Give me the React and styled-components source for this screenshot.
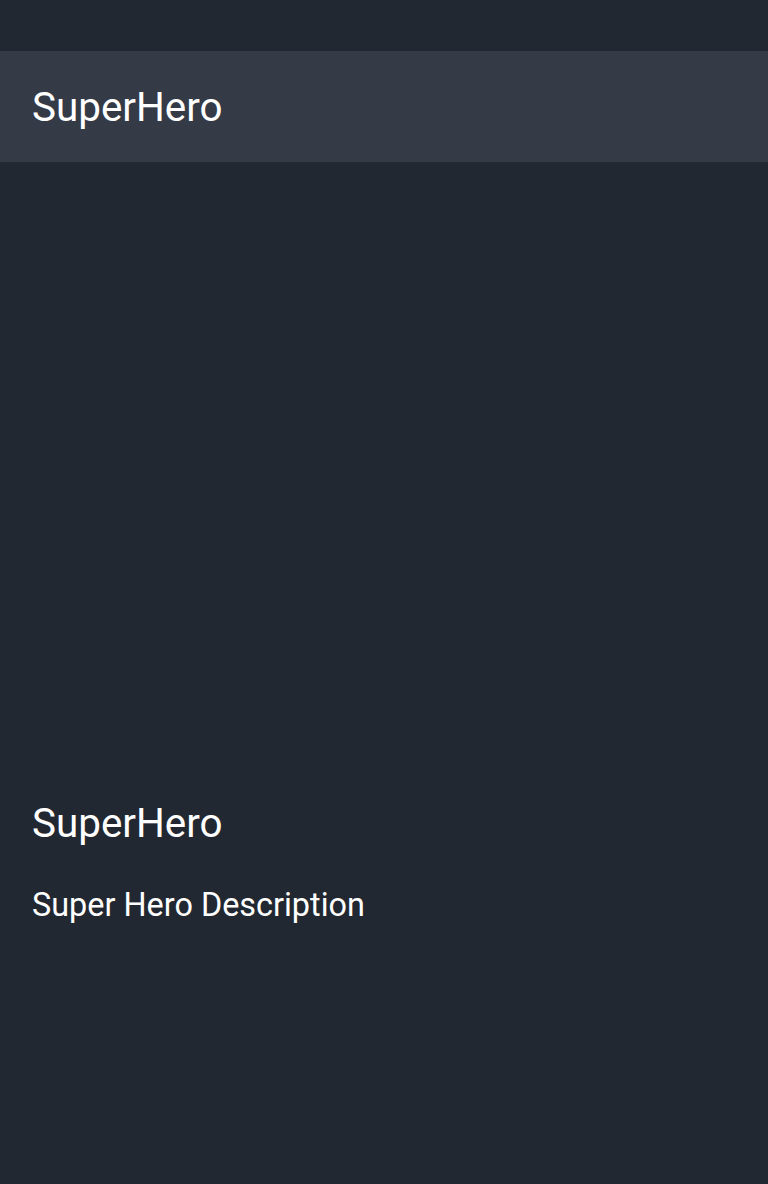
import React from "react";
import styled, { createGlobalStyle } from "styled-components";

const Global = createGlobalStyle`
  html, body {
    margin: 0;
    padding: 0;
    background: #222831;
  }
  * { box-sizing: border-box; }
`;

const Screen = styled.div`
  display: flex;
  flex-direction: column;
  min-height: 1184px;
  background: #222831;
  font-family: Roboto, "Noto Sans", sans-serif;
  color: #ffffff;
`;

const StatusBar = styled.div`
  height: 51px;
  background: #222831;
`;

const Toolbar = styled.header`
  height: 111px;
  display: flex;
  align-items: center;
  padding: 3px 32px 0;
  background: #343a46;
`;

const Title = styled.h1`
  margin: 0;
  font-size: 40.4px;
  font-weight: 400;
  line-height: 48px;
`;

const Content = styled.main`
  display: flex;
  flex-direction: column;
  padding: 638px 32px 0;
`;

const HeroName = styled.h2`
  margin: 0;
  font-size: 40.4px;
  font-weight: 400;
  line-height: 48px;
`;

const Description = styled.p`
  margin: 38px 0 0;
  font-size: 32.4px;
  line-height: 38px;
`;

export default function App() {
  return (
    <Screen>
      <Global />
      <StatusBar />
      <Toolbar>
        <Title>SuperHero</Title>
      </Toolbar>
      <Content>
        <HeroName>SuperHero</HeroName>
        <Description>Super Hero Description</Description>
      </Content>
    </Screen>
  );
}
